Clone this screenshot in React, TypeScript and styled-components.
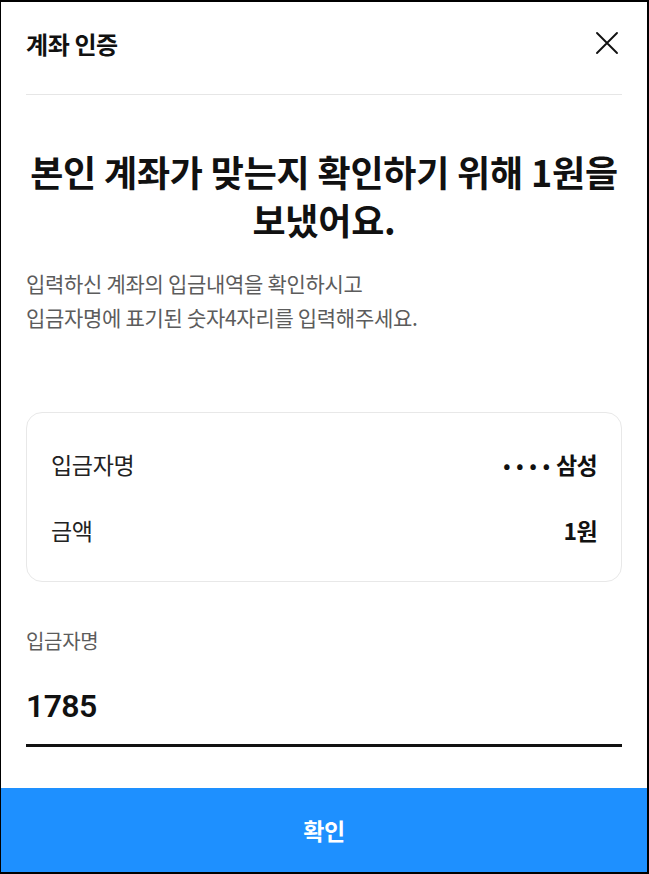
import React, { useState } from 'react';
import styled, { createGlobalStyle } from 'styled-components';

const GlobalStyle = createGlobalStyle`
  * {
    box-sizing: border-box;
  }

  html, body {
    margin: 0;
    padding: 0;
    background: #fff;
  }

  body {
    font-family: 'Noto Sans CJK KR', 'Noto Sans', sans-serif;
    color: #111;
  }
`;

type DetailRow = {
  label: string;
  masked?: boolean;
  value: string;
};

const rows: DetailRow[] = [
  { label: '입금자명', masked: true, value: '삼성' },
  { label: '금액', value: '1원' },
];

const CloseIcon: React.FC = () => (
  <svg width="24" height="24" viewBox="0 0 24 24" fill="none">
    <path
      d="M2 2L22 22M22 2L2 22"
      stroke="#111"
      strokeWidth="1.9"
      strokeLinecap="round"
    />
  </svg>
);

const App: React.FC = () => {
  const [code, setCode] = useState<string>('1785');

  return (
    <>
      <GlobalStyle />
      <Sheet>
        <Body>
          <Header>
            <Title>계좌 인증</Title>
            <CloseButton type="button" aria-label="닫기">
              <CloseIcon />
            </CloseButton>
          </Header>
          <Divider />

          <Headline>
            본인 계좌가 맞는지 확인하기 위해 1원을
            <br />
            보냈어요.
          </Headline>
          <Description>
            입력하신 계좌의 입금내역을 확인하시고
            <br />
            입금자명에 표기된 숫자4자리를 입력해주세요.
          </Description>

          <Card>
            {rows.map((row) => (
              <Row key={row.label}>
                <RowLabel>{row.label}</RowLabel>
                <RowValue>
                  {row.masked && <Dots>••••</Dots>}
                  {row.value}
                </RowValue>
              </Row>
            ))}
          </Card>

          <Field>
            <FieldLabel htmlFor="depositor-code">입금자명</FieldLabel>
            <CodeInput
              id="depositor-code"
              value={code}
              maxLength={4}
              inputMode="numeric"
              onChange={(e) => setCode(e.target.value)}
            />
          </Field>
        </Body>

        <SubmitButton type="button">확인</SubmitButton>
      </Sheet>
    </>
  );
};

export default App;

const Sheet = styled.div`
  width: 649px;
  height: 874px;
  display: flex;
  flex-direction: column;
  border: 2px solid #000;
  border-left-width: 1px;
  background: #fff;
  overflow: hidden;
`;

const Body = styled.div`
  padding: 0 25px 0 25px;
  display: flex;
  flex-direction: column;
`;

const Header = styled.header`
  display: flex;
  align-items: center;
  justify-content: space-between;
  height: 30px;
  margin-top: 26px;
`;

const Title = styled.h1`
  margin: 0;
  font-size: 24px;
  font-weight: 700;
  letter-spacing: -0.4px;
  color: #111;
`;

const CloseButton = styled.button`
  display: flex;
  align-items: center;
  justify-content: center;
  padding: 0;
  margin-right: 3px;
  border: 0;
  background: none;
  cursor: pointer;
`;

const Divider = styled.hr`
  margin: 36px 0 0;
  border: 0;
  border-top: 1px solid #e6e6e6;
`;

const Headline = styled.h2`
  margin: 52px 0 0;
  font-size: 36px;
  line-height: 48px;
  font-weight: 700;
  letter-spacing: -0.2px;
  text-align: center;
  color: #111;
`;

const Description = styled.p`
  margin: 23px 0 0;
  font-size: 21px;
  line-height: 34px;
  letter-spacing: -0.3px;
  color: #5c5c5c;
`;

const Card = styled.section`
  margin-top: 78px;
  padding: 18px 24px;
  border: 1px solid #e8e8e8;
  border-radius: 16px;
`;

const Row = styled.div`
  display: flex;
  align-items: center;
  justify-content: space-between;
  height: 66px;
`;

const RowLabel = styled.span`
  font-size: 23px;
  letter-spacing: -0.3px;
  color: #222;
`;

const RowValue = styled.span`
  display: flex;
  align-items: center;
  font-size: 23px;
  font-weight: 700;
  letter-spacing: -0.6px;
  color: #111;
`;

const Dots = styled.span`
  font-size: 19px;
  letter-spacing: 6px;
  margin-right: 0;
`;

const Field = styled.div`
  display: flex;
  flex-direction: column;
  margin-top: 48px;
`;

const FieldLabel = styled.label`
  font-size: 20px;
  line-height: 22px;
  letter-spacing: -0.3px;
  color: #5c5c5c;
`;

const CodeInput = styled.input`
  margin-top: 36px;
  padding: 0 0 20px;
  width: 100%;
  border: 0;
  border-bottom: 3px solid #111;
  outline: none;
  background: none;
  font-family: Roboto, 'Noto Sans', sans-serif;
  font-size: 32px;
  line-height: 36px;
  font-weight: 600;
  letter-spacing: -0.6px;
  color: #111;
`;

const SubmitButton = styled.button`
  margin-top: auto;
  height: 84px;
  width: 100%;
  border: 0;
  background: #1e90ff;
  color: #fff;
  font-family: 'Noto Sans CJK KR', sans-serif;
  font-size: 23px;
  font-weight: 700;
  letter-spacing: -0.5px;
  cursor: pointer;
`;
